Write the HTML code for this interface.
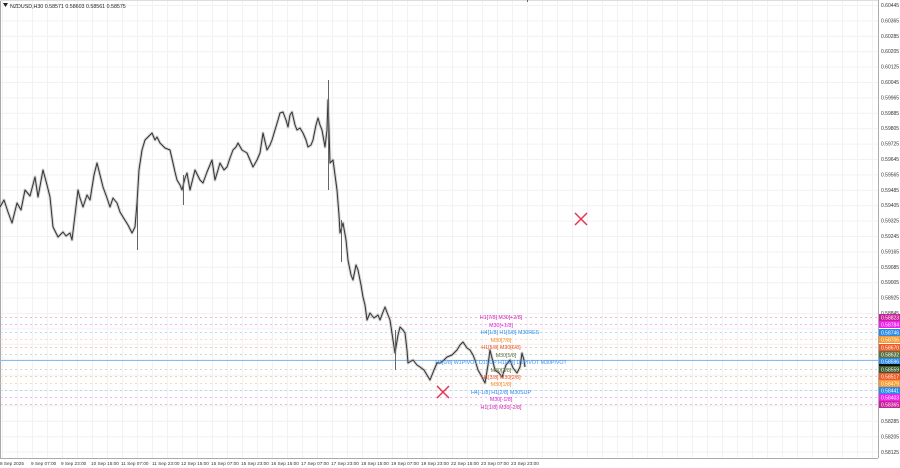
<!DOCTYPE html>
<html><head><meta charset="utf-8"><style>
html,body{margin:0;padding:0;background:#fff;width:900px;height:468px;overflow:hidden}
svg{display:block}
text{font-family:"Liberation Sans",sans-serif}
</style></head><body>
<svg width="900" height="468" viewBox="0 0 900 468" xmlns="http://www.w3.org/2000/svg">
<defs>
<pattern id="g" x="2" y="5" width="15" height="15.4" patternUnits="userSpaceOnUse">
<path d="M0.5 0V15.4M0 0.5H15" stroke="#f2f2f2" stroke-width="1" fill="none"/>
</pattern>
<polyline id="p" points="0,207 4,200 8,212 12,223 17,203 21,210 25,190 30,196 35,177 38,197 43,170 47,185 50,197 53,227 58,237 63,232 66,236 70,233 72,240 75,215 78,190 80,198 83,207 87,195 90,200 94,175 97,163 100,175 103,187 107,198 110,207 113,198 117,203 120,212 123,217 128,225 132,233 135,227 137,203 139,170 142,150 145,140 148,137 152,133 155,140 157,137 160,143 165,148 170,150 173,163 175,172 177,180 180,185 182,190 185,178 187,173 190,190 193,178 195,170 198,176 200,180 203,183 207,172 212,160 215,180 218,170 220,163 224,170 227,167 230,158 233,150 236,147 238,143 242,150 247,153 250,160 253,167 257,160 260,153 263,133 267,150 270,145 272,140 275,130 278,120 280,113 283,112 286,120 288,127 290,115 292,112 295,125 297,130 300,128 303,133 306,140 308,147 311,145 313,140 316,125 318,118 320,125 322,130 325,147 327,130 328,100 329,130 330,163 333,160 335,175 337,190 339,215 340,233 343,223 346,240 348,260 351,275 353,280 356,265 358,270 361,285 363,297 365,305 367,320 370,313 374,318 378,315 380,320 383,312 385,307 388,315 390,320 393,340 395,353 398,335 400,327 403,330 405,333 407,350 408,363 413,360 417,365 420,367 424,370 427,375 430,380 434,370 437,363 440,363 444,360 447,357 452,355 457,350 460,345 463,342 467,348 470,350 473,355 475,360 478,370 482,377 485,383 488,365 490,350 493,362 495,370 499,373 502,377 506,365 510,360 513,368 517,373 520,367 522,353 524,360 525,367"/>
</defs>
<rect x="0" y="0" width="878" height="458" fill="url(#g)"/>
<line x1="0.5" y1="0" x2="0.5" y2="458" stroke="#aaa"/>
<line x1="878.5" y1="0" x2="878.5" y2="458" stroke="#aaa"/>
<line x1="0" y1="458.5" x2="878" y2="458.5" stroke="#aaa"/>
<line x1="0" y1="0.5" x2="878" y2="0.5" stroke="#ddd"/>
<g stroke-width="1" stroke-dasharray="2,3" fill="none" opacity="0.6">
<line x1="0" x2="878" y1="317.5" y2="317.5" stroke="#e87fd0"/>
<line x1="0" x2="878" y1="324.5" y2="324.5" stroke="#f07ff0"/>
<line x1="0" x2="878" y1="332.5" y2="332.5" stroke="#8cc4f5"/>
<line x1="0" x2="878" y1="339.5" y2="339.5" stroke="#f8c490"/>
<line x1="0" x2="878" y1="347.5" y2="347.5" stroke="#f4a890"/>
<line x1="0" x2="878" y1="354.5" y2="354.5" stroke="#b0c0a0"/>
<line x1="0" x2="878" y1="369.5" y2="369.5" stroke="#b0c0a0"/>
<line x1="0" x2="878" y1="376.5" y2="376.5" stroke="#f4a890"/>
<line x1="0" x2="878" y1="383.5" y2="383.5" stroke="#f8c490"/>
<line x1="0" x2="878" y1="390.5" y2="390.5" stroke="#8cc4f5"/>
<line x1="0" x2="878" y1="397.5" y2="397.5" stroke="#f07ff0"/>
<line x1="0" x2="878" y1="404.5" y2="404.5" stroke="#e87fd0"/>
</g>
<line x1="0" x2="878" y1="360.5" y2="360.5" stroke="#88bbee" stroke-width="1"/>
<g fill="none" stroke-linejoin="round">
<use href="#p" stroke="#aaa" stroke-width="3" opacity="0.5"/>
<use href="#p" stroke="#333" stroke-width="1"/>
</g>
<g stroke="#666" stroke-width="1">
<line x1="328.5" y1="80" x2="328.5" y2="190"/>
<line x1="137.5" y1="200" x2="137.5" y2="250"/>
<line x1="341.5" y1="220" x2="341.5" y2="262"/>
<line x1="395.5" y1="330" x2="395.5" y2="370"/>
<line x1="183.5" y1="175" x2="183.5" y2="205"/>
<line x1="527.5" y1="0" x2="527.5" y2="2"/>
</g>
<g stroke="#e8334f" stroke-width="1.5">
<line x1="575" y1="213" x2="587" y2="225"/><line x1="587" y1="213" x2="575" y2="225"/>
<line x1="437" y1="386" x2="449" y2="398"/><line x1="449" y1="386" x2="437" y2="398"/>
</g>
<g font-size="5.3" text-anchor="middle">
<text x="501" y="319" fill="#d020b0">H1[7/8] M30[+2/8]</text>
<text x="501" y="327" fill="#e020e0">M30[+1/8]</text>
<text x="510" y="334" fill="#2a8ae8">H4[1/8] H1[6/8] M30RES</text>
<text x="501" y="342" fill="#f08a20">M30[7/8]</text>
<text x="501" y="349" fill="#e85020">H1[5/8] M30[6/8]</text>
<text x="506" y="357" fill="#607040">M30[5/8]</text>
<text x="501" y="364" fill="#3a90e8">H4[0/8] W1PIVOT D1SUP H1[4/8] D1PIVOT M30PIVOT</text>
<text x="501" y="372" fill="#607040">M30[3/8]</text>
<text x="501" y="379" fill="#e85020">H1[3/8] M30[2/8]</text>
<text x="501" y="386" fill="#f08a20">M30[1/8]</text>
<text x="501" y="394" fill="#2a8ae8">H4[-1/8] H1[2/8] M30SUP</text>
<text x="501" y="401" fill="#e020e0">M30[-1/8]</text>
<text x="501" y="409" fill="#d020b0">H1[1/8] M30[-2/8]</text>
</g>
<path d="M3 3 L8 3 L5.5 7 Z" fill="#222"/>
<text x="10" y="8" font-size="5.3" fill="#222">NZDUSD,H30  0.58571 0.58603 0.58561 0.58575</text>
<g font-size="5" fill="#333">
<text x="881" y="7">0.60445</text><text x="881" y="22.4">0.60365</text><text x="881" y="37.8">0.60285</text><text x="881" y="53.2">0.60205</text><text x="881" y="68.6">0.60125</text><text x="881" y="84">0.60045</text><text x="881" y="99.4">0.59965</text><text x="881" y="114.8">0.59885</text><text x="881" y="130.2">0.59805</text><text x="881" y="145.6">0.59725</text><text x="881" y="161">0.59645</text><text x="881" y="176.4">0.59565</text><text x="881" y="191.8">0.59485</text><text x="881" y="207.2">0.59405</text><text x="881" y="222.6">0.59325</text><text x="881" y="238">0.59245</text><text x="881" y="253.4">0.59165</text><text x="881" y="268.8">0.59085</text><text x="881" y="284.2">0.59005</text><text x="881" y="299.6">0.58925</text><text x="881" y="315">0.58845</text><text x="881" y="423">0.58285</text><text x="881" y="438.4">0.58205</text><text x="881" y="453.8">0.58125</text>
</g>
<g font-size="5" fill="#fff">
<rect x="879" y="314" width="21" height="7" fill="#c8209a"/><text x="881" y="319.5">0.58823</text>
<rect x="879" y="321" width="21" height="7" fill="#f020f0"/><text x="881" y="326.5">0.58784</text>
<rect x="879" y="329" width="21" height="7" fill="#2a8ae8"/><text x="881" y="334.5">0.58746</text>
<rect x="879" y="336" width="21" height="7" fill="#f89a30"/><text x="881" y="341.5">0.58706</text>
<rect x="879" y="344" width="21" height="7" fill="#f05a28"/><text x="881" y="349.5">0.58670</text>
<rect x="879" y="351" width="21" height="7" fill="#5a7040"/><text x="881" y="356.5">0.58632</text>
<rect x="879" y="358" width="21" height="7" fill="#2a8ae8"/><text x="881" y="363.5">0.58596</text>
<rect x="879" y="364" width="21" height="4" fill="#111"/>
<rect x="879" y="366" width="21" height="7" fill="#3a5a30"/><text x="881" y="371.5">0.58559</text>
<rect x="879" y="373" width="21" height="7" fill="#f05a28"/><text x="881" y="378.5">0.58517</text>
<rect x="879" y="380" width="21" height="7" fill="#f89a30"/><text x="881" y="385.5">0.58479</text>
<rect x="879" y="387" width="21" height="7" fill="#2a8ae8"/><text x="881" y="392.5">0.58441</text>
<rect x="879" y="394" width="21" height="7" fill="#f020f0"/><text x="881" y="399.5">0.58403</text>
<rect x="879" y="401" width="21" height="7" fill="#c8209a"/><text x="881" y="406.5">0.58365</text>
</g>
<g font-size="4.7" fill="#333">
<text x="0" y="465">8 Sep 2025</text><text x="31" y="465">9 Sep 07:00</text><text x="61" y="465">9 Sep 23:00</text><text x="91" y="465">10 Sep 15:00</text><text x="121" y="465">11 Sep 07:00</text><text x="152" y="465">11 Sep 23:00</text><text x="181" y="465">12 Sep 15:00</text><text x="211" y="465">15 Sep 07:00</text><text x="241" y="465">15 Sep 23:00</text><text x="271" y="465">16 Sep 15:00</text><text x="301" y="465">17 Sep 07:00</text><text x="331" y="465">17 Sep 23:00</text><text x="361" y="465">18 Sep 15:00</text><text x="391" y="465">19 Sep 07:00</text><text x="421" y="465">19 Sep 23:00</text><text x="451" y="465">22 Sep 15:00</text><text x="481" y="465">23 Sep 07:00</text><text x="511" y="465">23 Sep 23:00</text>
</g>
</svg>
</body></html>
